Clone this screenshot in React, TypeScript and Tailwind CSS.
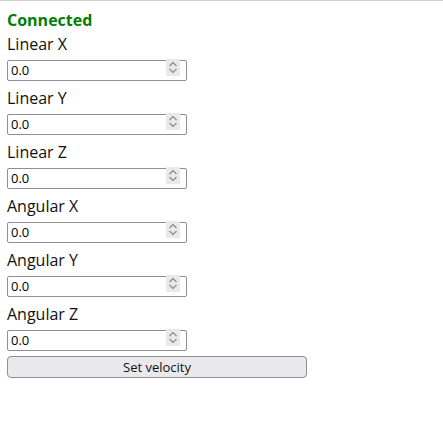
import { useState } from "react";

type FieldProps = {
    label: string;
    value: string;
    onChange: (v: string) => void;
}

const Spinner = () => {
    return (
        <div className="absolute right-[7px] top-[2px] flex h-[17px] w-[14px] items-center justify-center bg-[#e9e9ed]">
            <svg width="10" height="15" viewBox="0 0 10 15" fill="none" stroke="#8a8a8a" strokeWidth="1.2">
                <path d="M1.5 6 L5 2.5 L8.5 6" />
                <path d="M1.5 9 L5 12.5 L8.5 9" />
            </svg>
        </div>
    );
}

const Field = ({ label, value, onChange }: FieldProps) => {
    return (
        <div className="flex flex-col">
            <label className="h-[24px] text-[16px] leading-[24px] text-[#111]">{label}</label>
            <div className="relative mt-[1px] h-[21px] w-[180px]">
                <input
                    type="text"
                    value={value}
                    onChange={(e) => onChange(e.target.value)}
                    className="h-[21px] w-[180px] rounded-[2px] border border-[#8f8f8f] bg-white px-[3px] text-[13px] leading-[19px] text-black outline-none"
                />
                <Spinner />
            </div>
        </div>
    );
}

const names = ["Linear X", "Linear Y", "Linear Z", "Angular X", "Angular Y", "Angular Z"];

export default function App() {
    const [values, setValues] = useState<string[]>(names.map(() => "0.0"));

    return (
        <div className="min-h-[427px] w-[443px] border-t border-[#cfcfcf] bg-white px-[7px] pt-[7px] font-['Open_Sans','Noto_Sans',sans-serif]">
            <p className="h-[24px] text-[16px] font-bold leading-[24px] text-[#008000]">Connected</p>
            <div className="flex flex-col gap-[8px]">
                {names.map((n, i) => (
                    <Field
                        key={n}
                        label={n}
                        value={values[i]}
                        onChange={(v) => setValues(values.map((x, j) => (j === i ? v : x)))}
                    />
                ))}
                <button className="h-[22px] w-[300px] rounded-[4px] border border-[#8f8f8f] bg-[#e9e9ed] text-[13px] leading-[20px] text-[#111]">
                    Set velocity
                </button>
            </div>
        </div>
    );
}
